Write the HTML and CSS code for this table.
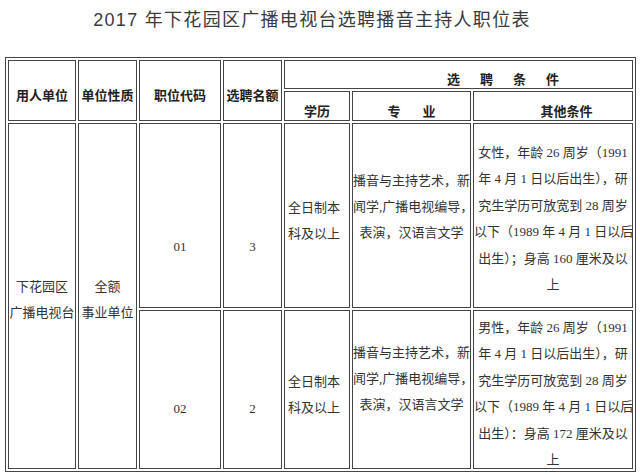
FILE: index.html
```html
<!DOCTYPE html>
<html lang="zh-CN">
<head>
<meta charset="utf-8">
<title>2017年下花园区广播电视台选聘播音主持人职位表</title>
<link rel="stylesheet" href="styles.css">
</head>
<body>
<h1 class="title">2017 年下花园区广播电视台选聘播音主持人职位表</h1>
<table class="jobs">
  <colgroup>
    <col class="w-unit"><col class="w-type"><col class="w-code"><col class="w-quota">
    <col class="w-edu"><col class="w-major"><col class="w-other">
  </colgroup>
  <thead>
    <tr class="hrow1">
      <th rowspan="2" class="hmain">用人单位</th>
      <th rowspan="2" class="hmain">单位性质</th>
      <th rowspan="2" class="hmain">职位代码</th>
      <th rowspan="2" class="hmain">选聘名额</th>
      <th colspan="3" class="hcond">选聘条件</th>
    </tr>
    <tr class="hrow2">
      <th class="hsub">学历</th>
      <th class="hsub">专<span class="gap"></span>业</th>
      <th class="hsub hother">其他条件</th>
    </tr>
  </thead>
  <tbody>
    <tr class="brow1">
      <td rowspan="2" class="unit">下花园区<br>广播电视台</td>
      <td rowspan="2" class="unit">全额<br>事业单位</td>
      <td class="num n1">01</td>
      <td class="num n1">3</td>
      <td class="edu e1">全日制本<br>科及以上</td>
      <td class="major m1">播音与主持艺术，新<br>闻学,广播电视编导，<br>表演，汉语言文学</td>
      <td class="cond c1"><div class="lines">女性，年龄 26 周岁（1991<br>年 4 月 1 日以后出生），研<br>究生学历可放宽到 28 周岁<br>以下（1989 年 4 月 1 日以后<br>出生）；身高 160 厘米及以<br>上</div></td>
    </tr>
    <tr class="brow2">
      <td class="num n2">02</td>
      <td class="num n2">2</td>
      <td class="edu e2">全日制本<br>科及以上</td>
      <td class="major m2">播音与主持艺术，新<br>闻学,广播电视编导，<br>表演，汉语言文学</td>
      <td class="cond c2"><div class="lines">男性，年龄 26 周岁（1991<br>年 4 月 1 日以后出生），研<br>究生学历可放宽到 28 周岁<br>以下（1989 年 4 月 1 日以后<br>出生）：身高 172 厘米及以<br>上</div></td>
    </tr>
  </tbody>
</table>
</body>
</html>
```

FILE: styles.css
```css
html, body {
  margin: 0;
  padding: 0;
  background: #fff;
}

body {
  width: 640px;
  height: 475px;
  overflow: hidden;
  font-family: "Liberation Serif", "Noto Sans CJK SC", serif;
  color: #333;
}

.title {
  margin: 0 0 17px;
  height: 40px;
  line-height: 40px;
  padding-right: 16px;
  text-align: center;
  font-family: "Liberation Sans", "Noto Sans CJK SC", sans-serif;
  font-size: 18px;
  font-weight: normal;
  letter-spacing: 1.3px;
  color: #3a3a3a;
}

.jobs {
  margin-left: 5px;
  width: 631px;
  table-layout: fixed;
  border-collapse: separate;
  border-spacing: 2px;
  border: 1px solid #444;
}

.w-unit { width: 68px; }
.w-type { width: 59px; }
.w-code { width: 82px; }
.w-quota { width: 59px; }
.w-edu { width: 66px; }
.w-major { width: 119px; }
.w-other { width: 160px; }

.jobs th,
.jobs td {
  border: 1px solid #444;
  padding: 0;
  vertical-align: top;
  font-size: 13px;
  white-space: nowrap;
  text-align: center;
}

.jobs th {
  font-family: "Noto Sans CJK SC", sans-serif;
  font-weight: bold;
  color: #222;
  line-height: 16px;
}

.jobs td {
  line-height: 26px;
}

.hrow1 { height: 29px; }
.hrow2 { height: 30px; }
.brow1 { height: 185px; }
.brow2 { height: 159px; }

.jobs .hmain { padding-top: 26px; }

.jobs .hcond {
  text-align: left;
  padding-top: 10px;
  padding-left: 162px;
  letter-spacing: 20px;
}

.jobs .hsub { padding-top: 11px; }
.jobs .hother { padding-left: 27px; }

.gap {
  display: inline-block;
  width: 22px;
}

.jobs .unit { padding-top: 150px; }

.jobs .n1 { padding-top: 110px; }
.jobs .n2 { padding-top: 85px; }

.jobs .edu {
  text-align: left;
  padding-left: 3px;
  line-height: 26.4px;
}
.jobs .e1 { padding-top: 71px; }
.jobs .e2 { padding-top: 58px; }

.jobs .m1 { padding-top: 44px; }
.jobs .m2 { padding-top: 29px; }

.jobs .cond { line-height: 26.4px; }
.jobs .c1 { padding-top: 16px; }
.jobs .c2 { padding-top: 4px; }
.cond .lines { margin-bottom: -12px; }
```
